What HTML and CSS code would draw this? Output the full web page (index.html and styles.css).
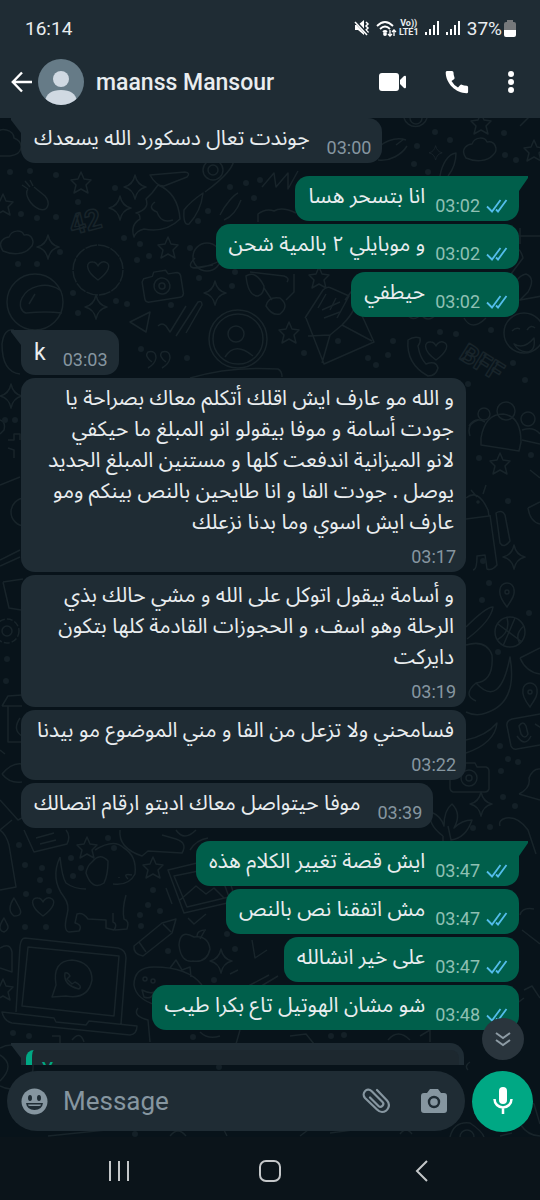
FILE: index.html
```html
<!DOCTYPE html>
<html lang="en">
  <head>
    <meta charset="utf-8" />
    <meta name="viewport" content="width=device-width, initial-scale=1" />
    <title>maanss Mansour</title>
    <link rel="stylesheet" href="styles.css">
  </head>
  <body>
    <!-- shapes used more than once -->
    <svg class="defs" aria-hidden="true">
      <symbol id="ticks" viewBox="0 0 22 15">
        <path d="M1 8.5 6 13.5 14.500 2M10 11.500 12 13.500 20.500 2" fill="none" stroke="#53bdeb" stroke-width="1.800" />
      </symbol>
      <symbol id="signal" viewBox="0 0 15 16">
        <path d="M1 12v3M5 9v6M9 5v10M13 1v14" fill="none" stroke="#fff" stroke-width="2" />
      </symbol>
      <g id="star"><path d="M0-11 3-4 10-3 5 2 7 10 0 6-7 10-5 2-10-3-3-4Z" /></g>
      <g id="sparkle"><path d="M0-12Q2-2 11 0 2 2 0 12-2 2-11 0-2-2 0-12Z" /></g>
      <g id="heart"><path d="M0 10C-14 0-12-9-5-8-2-8 0-4 0-4S2-9 7-8C14-6 11 2 0 10Z" /></g>
      <g id="cloud"><path d="M-15 8C-22-2-12-6-9-6-6-14 4-13 6-8 14-10 18 0 12 5 6 12-6 12-15 8Z" /></g>
      <g id="camera">
        <path d="M-17-10-8-11-6-15 6-15 8-11 17-11Q20-10 20-7V11Q19 14 16 14H-16Q-19 13-19 10V-7Z" />
        <circle r="8" /><circle r="3" />
      </g>
      <g id="pin"><path d="M0 12C-7 3-8-1-7-5A7 7 0 0 1 7-5C8 0 5 4 0 12Z" /><circle cy="-3" r="2" /></g>
      <g id="hand"><path d="M-8-8C-12-3-6 8 3 12 12 15 15 6 9-1L-2-10M-8-8-14-12M-6-10-11-16M-3-11-6-17" /></g>
    </svg>

    <div class="app">
      <header class="header">
        <div class="status">
          <time>16:14</time>
          <div class="status-icons">
            <svg width="16" height="18" viewBox="0 0 16 18" fill="#fff">
              <path d="M1 6h3l6-5v15l-6-5H1z" />
              <path d="M12 3l2 2-2 2 2 2-2 2 2 2-2 2" fill="none" stroke="#fff" stroke-width="1.500" />
              <path d="M1 2l13 14" stroke="#1f2c34" stroke-width="3" />
              <path d="M1 3l12 13" stroke="#fff" stroke-width="1.500" />
            </svg>
            <svg width="21" height="17" viewBox="0 0 21 17" fill="none" stroke="#fff" stroke-width="1.800">
              <path d="M1 6Q9-2 17 6M4 9Q9 4 14 9M7 12Q9 10 11 12" />
              <circle cx="9" cy="14" r="1" fill="#fff" />
              <path d="M14 10v6M12 14l2 2 2-2M18 16v-6M16 12l2-2 2 2" stroke-width="1.300" />
            </svg>
            <span class="volte"><span>Vo))</span><span>LTE1</span></span>
            <svg width="15" height="16"><use href="#signal" /></svg>
            <svg width="15" height="16"><use href="#signal" /></svg>
            <span>37%</span>
            <svg class="battery" width="12" height="17" viewBox="0 0 12 17">
              <path d="M3 0h6v2h1q2 0 2 2v6H0V4q0-2 2-2h1z" fill="#76797b" />
              <path d="M0 10h12v5q0 2-2 2H2q-2 0-2-2z" fill="#fff" />
            </svg>
          </div>
        </div>

        <div class="toolbar">
          <button class="icon-btn back" aria-label="Back">
            <svg width="22" height="22" viewBox="0 0 22 22" fill="none" stroke="#fff" stroke-width="2.400">
              <path d="M21 11H2M11 1.500 1.800 11 11 20.500" />
            </svg>
          </button>
          <svg class="avatar" viewBox="0 0 46 46">
            <defs><clipPath id="round"><circle cx="23" cy="23" r="23" /></clipPath></defs>
            <g clip-path="url(#round)">
              <rect width="46" height="46" fill="#667b87" />
              <circle cx="23" cy="20" r="8" fill="#d0d9e2" />
              <path d="M7 42Q9 31 23 31T39 42L34 46H12Z" fill="#d0d9e2" />
            </g>
          </svg>
          <h1 class="name">maanss Mansour</h1>
          <button class="icon-btn" aria-label="Video call">
            <svg width="28" height="20" viewBox="0 0 28 20" fill="#fff">
              <rect x="0" y="1" width="20" height="18" rx="3" />
              <path d="M21 8l4-4q2-1 2 1v10q0 2-2 1l-4-4z" />
            </svg>
          </button>
          <button class="icon-btn" aria-label="Call">
            <svg width="24" height="24" viewBox="0 0 24 24" fill="#fff">
              <path d="M2 1h5q1.500 0 1.500 1.500 0 3 1 5 .3 1-.5 1.800L6.500 11q2.500 4.500 6.500 6.500l2-2.300q.8-.8 1.800-.5 2 .8 5 1 1.300.1 1.300 1.500v4.500q0 1.500-1.500 1.500C11 23 1 14 .7 2.500.7 1 2 1 2 1z" />
            </svg>
          </button>
          <button class="icon-btn" aria-label="More options">
            <svg width="8" height="24" viewBox="0 0 8 24" fill="#fff">
              <circle cx="4" cy="4" r="3" /><circle cx="4" cy="12" r="3" /><circle cx="4" cy="20" r="3" />
            </svg>
          </button>
        </div>
      </header>

      <main class="room">
        <svg class="wallpaper" viewBox="0 118 540 1019" preserveAspectRatio="xMidYMin slice" aria-hidden="true">
          <!-- top -->
          <path d="M-4 134C0 126 14 130 14 138 24 142 24 154 10 156H-4" />
          <use href="#star" x="481" y="124" /><use href="#star" x="534" y="151" />
          <path d="M404 118A12 12 0 0 0 427 118M410 118a6 6 0 0 0 12 0M520 126l10-10M376 152C380 142 396 136 406 140M378 160C390 162 402 154 407 146M396 145l8-6M440 176c2-12 8-22 16-23 0 10-4 18-8 23" />
          <use href="#cloud" x="481" y="150" /><use href="#sparkle" x="436" y="153" transform="translate(174 61) scale(.6)" />
          <use href="#star" x="81" y="183" /><use href="#star" x="3" y="205" />
          <use href="#sparkle" x="135" y="187" /><use href="#sparkle" x="120" y="208" />
          <use href="#hand" x="36" y="197" />
          <path d="M150 175l35-3q6 1 2 5l-23 9q-8 0-14-11ZM152 193l6-8q20 8 22 34-14 14-36 10-8 2-10 8-4-12 6-18 0-6-4-6 14-4 10-14ZM184 210q6-8 19-17-2 18-14 31-6 2-5-14ZM205 192q30-22 29-34M155 202q-8 6 2 10 4 12 16 8" />
          <circle cx="213" cy="170" r="10" /><circle cx="213" cy="170" r="5" />
          <path d="M220 215c6-12 14-20 18-22M224 220c10-4 14-12 17-20M262 187l12-14 2 14 12-14 0 16 10-18M258 222v-8q8-6 16-3 8-5 22 2" />
          <text x="72" y="235" font-size="28" transform="rotate(-14 72 235)">42</text>
          <use href="#cloud" x="18" y="243" /><use href="#sparkle" x="48" y="247" /><use href="#star" x="168" y="248" />
          <circle cx="98" cy="270" r="25" stroke-dasharray="12 1" /><use href="#heart" x="98" y="270" />
          <use href="#camera" x="162" y="286" transform="rotate(-9 162 286)" />
          <circle cx="207" cy="257" r="14" /><path d="M195 258c-16 16 14 10 26 2M193 268l20-3" />
          <circle cx="35" cy="302" r="28" /><path d="M60 290c-14-9-32-4-38 8-4 8 0 14 4 15q20-2 36 0M29 304l6-10" />
          <use href="#sparkle" x="96" y="307" /><use href="#sparkle" x="215" y="293" /><use href="#star" x="319" y="278" />
          <path d="M246 276q10-6 18 10 0 8-6 10-10 0-12-20ZM266 306q2-10 14-8 10 8 0 16-8 2-14-8ZM264 288l8 12M250 272l34 4q6 2 3 6M286 300l8-8v-18" />
          <path d="M305 318l18-28q4-4 8-2l18 8-12 22M318 308l8-14M330 310l6-12M345 300l12-16" />
          <path d="M505 250q14-8 18 8l-12 16M512 292q4-16 14-18 10 4 2 18l-8 8 22-4M518 236h22M520 228v16" />
          <path d="M130 322l20-10-4 20ZM158 326q4-4 8 0l4 6 16-26M176 336l22-34q4-2 4 3l-16 28" />
          <circle cx="238" cy="339" r="29" /><circle cx="238" cy="339" r="25" /><circle cx="236" cy="334" r="8" />
          <path d="M225 357q10-16 28-1M152 362q-8-6-4-10 8-2 8 6-1 6-8 10M166 362q-8-6-4-10 8-2 8 6-1 6-8 10M190 378q40-12 88-9 4 2 4 8" />
          <use href="#star" x="289" y="333" />
          <path d="M306 318l18 46 50-22-20-44M308 336l22-1 12-10 30 16M330 335l-8 28M322 310l18-8M324 318l16-6M342 325q18-18 12-30" />
          <path d="M408 340q6-4 12-2 1 4-2 8 2 12 8 18 10-4 12 4-2 8-10 8-22-12-20-36Z" />
          <use href="#heart" x="436" y="350" />
          <text x="458" y="358" font-size="26" transform="rotate(32 458 358)">BFF</text>
          <circle cx="524" cy="333" r="20" /><path d="M514 344q10 6 20-6 2 14-8 14-8-1-12-8ZM512 331q4-4 8-2M527 330q4-6 8-2" />
          <path d="M405 312q8 12 16 2 6 10 16 0M464 318q8 14 22 0" />
          <!-- right edge -->
          <path d="M481 438q4-24 22-24 18 2 18 28l-2 9-38-6ZM470 436q-4-12 8-16M522 440l18 4M469 426q6-10 16-4M522 430q12-4 18 4" />
          <circle cx="506" cy="411" r="9" /><circle cx="484" cy="414" r="6" /><circle cx="528" cy="419" r="7" />
          <use href="#star" x="500" y="464" />
          <path d="M466 498q12-10 22 12l1 6-23 3M471 490l6 7M486 485l-3 9M490 515l7 50q-5 6-10 4l-2-14-8 1q0 14-4 14M496 513q6-4 9 2l5 26q-6 8-10 2ZM528 508l12-6M528 508q2 14 12 16M530 470l10 8" />
          <circle cx="478" cy="502" r="1" /><use href="#sparkle" x="514" y="557" />
          <use href="#pin" x="507" y="595" /><use href="#pin" x="530" y="695" />
          <circle cx="510" cy="632" r="15" /><path d="M498 624l24 18M503 646l12-28M497 640q14-8 10-22M520 644q-6-10 4-18" />
          <path d="M466 627q20-20 27-20-2 14-26 32M466 645q20-6 26 10 2 26-16 28-14 12 0 18M476 683q24 26 34-26 8 46-24 56-10 4-20-1M520 658l20-10M520 658q6 14 20 16M466 740q20-4 31-17-2 20-31 30" />
          <path d="M540 714l-28 5q-6 2-5 7l4 20q2 4 6 3l23-4M519 726q4-6 7 0l2 8q-3 6-7 0ZM517 736q8 12 14 0M535 724l8 5" />
          <use href="#camera" x="469" y="778" /><use href="#sparkle" x="481" y="804" />
          <path d="M519 794q12-6 10-16 4-10 11-9M519 794l21 6M500 826q-2-6 6-8 12-2 22 12l8 24" />
          <path d="M443 836q-16-12-12-24 10 4 13 14 0-16 8-22 10 10 2 24 8-8 18-8-6 18-21 20l-3-14M443 836v10" />
          <!-- left edge -->
          <use href="#sparkle" x="11" y="396" />
          <path d="M0 420q6 2 4 10l-4 4M8 440h6v-6h6v6M8 448l6 2v8M0 485l20-8M0 560l20-10M0 566l20-9M14 330q-10-2-12 14 0 28 18 30" />
          <circle cx="25" cy="512" r="14" /><path d="M3 582l20-3M3 582l6 26 12 2" />
          <circle cx="7" cy="631" r="12" stroke-dasharray="6 2" /><circle cx="7" cy="631" r="5" />
          <path d="M2 706l6-10 14-1M2 706h20M8 706v36h14M20 718q-8 12 2 18M0 750l5 4M2 774q10-12 20-10M2 774q8 10 20 8M0 800l18 20 10-5M0 830l12-10" />
          <!-- bottom -->
          <path d="M0 830q6 4 9 15l7 42-16 3M24 830l10 22 33-8q4-8-1-14M36 838l18-5M40 844l16-4" />
          <use href="#star" x="87" y="848" /><use href="#star" x="153" y="868" />
          <path d="M120 830q-2 18 22 26l6-5 34 2q6-10-6-14l-14-4M190 850q6-10 18-12M176 830q8 12 20 0" />
          <path d="M60 857q-10 22 4 40 6 8 3 18-4 16 2 17l10-1q4-6-4-8l2-9q6-2 11 5l18 1 0 8 8 2q4-6-1-8v-9M60 857q2 20 6 26 8 6 20 6M113 884q16 2 22-10 2-18-11-26-10-10-29 2M92 862q8-10 16-1 0 14-4 22-12 8-18-10 1-7 6-11M126 895q-4 14-2 24 6 2 3 10l-12 1" />
          <path d="M128 879q-6-6 4-4M119 877v1M14 898q-8 12 0 18 10 0 5-9ZM4 918q-8 12 0 14 6-3 3-8Z" />
          <use href="#heart" x="43" y="906" />
          <path d="M168 870l54-13 14 44-52 12ZM174 876l44-9 11 30-42 10ZM180 900l16-14 10 8 8-6 10 10M166 888l6 16M188 918l6 6 12-10" />
          <path d="M134 946l28-23 14-4-4 14-29 23q-10-2-9-10ZM139 942l7 10M163 924l8 8" />
          <path d="M194 937q-14-8-15 8 2 18 14 16 14 2 17-12-2-14-16-12ZM197 936q0-6 9-6M200 939l5-9" />
          <path d="M25 938l93 10q8 2 8 10l-5 66M25 938q-4 0-5 8l-4 66M28 947l91 9-5 60-92-10ZM2 1012l52 6 2 4 30 3 3-4 48 5q0 8-7 9l-118-12q-8-2-10-11Z" />
          <path d="M52 997l4-12q-4-24 16-25 20 2 20 20-4 20-26 16l-14 1ZM65 973q-2 12 14 16 4-3-4-7l-3 2-5-5 3-3q-2-4-5-3Z" />
          <circle cx="145" cy="979" r="2" /><circle cx="153" cy="981" r="2" />
          <path d="M134 985q0-18 20-18 34 0 48 18M134 985q2 14 22 20M142 990q8 4 12 2-2 8-10 5ZM170 968l6-8 6 10 8-3 1 10M0 948q10-6 12 4v20l-12-4" />
          <use href="#star" x="3" y="990" /><use href="#sparkle" x="221" y="961" />
          <path d="M230 974l8-4M229 990l10 1 30-16M252 940l3 18 12-8M258 988l20-12" />
          <path d="M520 915q2-8 14-6M522 930l18 14M524 990l8-4 8 12M516 1004l8-6" />
          <path d="M138 1008q-6 8 10 12l2 22M0 1048a22 22 0 1 1 0 38M0 1055q16 10 0 26M52 1036h8v8h-8M72 1040q8-10 12 2M200 1032q8 8 20 4M240 1030l-4 14M290 1036l16-2 8 10M388 1040q10-12 22 0M420 1036l10-6v12" />
          <path d="M470 1062q-6 4-2 8M48 1136l58-6M170 1136q8-10 16 0M224 1130l3 6M300 1136l8-6M330 1133l30-4M400 1134q6-8 12 0M450 1137q4-16 20-14 12 8 14 14M460 1137a7 7 0 0 1 14 0M500 1136l12-3M524 1100l10 4 6 20M520 1124q8 12 20 12" />
          <!-- confetti -->
          <path class="dots" d="M10 172h0M30 171h0M56 175h0M21 214h0M37 218h0M78 202h0M115 188h0M56 217h0M124 238h0M140 244h0M137 260h0M60 252h0M37 264h0M18 264h0M73 293h0M127 304h0M116 301h0M78 313h0M171 305h0M199 278h0M232 286h0M208 211h0M198 221h0M230 187h0M246 183h0M260 180h0M254 198h0M190 248h0M149 256h0M235 272h0M141 349h0M187 358h0M304 353h0M338 341h0M393 341h0M368 358h0M376 365h0M388 355h0M440 332h0M456 334h0M491 330h0M513 363h0M525 380h0M468 384h0M479 458h0M508 501h0M531 455h0M483 561h0M489 583h0M529 613h0M498 652h0M482 600h0M500 746h0M508 759h0M518 762h0M501 771h0M503 797h0M473 828h0M490 827h0M515 806h0M417 146h0M435 132h0M450 140h0M504 133h0M505 155h0M516 160h0M414 164h0M428 172h0M19 845h0M25 865h0M42 868h0M40 880h0M49 891h0M26 894h0M46 927h0M25 927h0M71 858h0M81 868h0M73 876h0M108 838h0M114 848h0M153 890h0M148 905h0M140 915h0M160 911h0M141 926h0M168 951h0M227 934h0M235 949h0M214 980h0M13 1033h0M29 1036h0M331 1036h0M344 1035h0M193 1037h0M219 1067h0M135 1134h0M5 420h0M15 420h0M7 659h0M6 681h0" />
        </svg>

        <ol class="messages">
          <li class="msg in tail"><p dir="rtl">جوندت تعال دسكورد الله يسعدك</p><time>03:00</time></li>

          <li class="msg out tail first"><p dir="rtl">انا بتسحر هسا</p><time>03:02</time><svg class="ticks"><use href="#ticks" /></svg></li>
          <li class="msg out"><p dir="rtl">و موبايلي ٢ بالمية شحن</p><time>03:02</time><svg class="ticks"><use href="#ticks" /></svg></li>
          <li class="msg out"><p dir="rtl">حيطفي</p><time>03:02</time><svg class="ticks"><use href="#ticks" /></svg></li>

          <li class="msg in tail first"><p>k</p><time>03:03</time></li>
          <li class="msg in long">
            <p dir="rtl">و الله مو عارف ايش اقلك أتكلم معاك بصراحة يا<br>جودت أسامة و موفا بيقولو انو المبلغ ما حيكفي<br>لانو الميزانية اندفعت كلها و مستنين المبلغ الجديد<br>يوصل . جودت الفا و انا طايحين بالنص بينكم ومو<br>عارف ايش اسوي وما بدنا نزعلك</p>
            <time>03:17</time>
          </li>
          <li class="msg in long">
            <p dir="rtl">و أسامة بيقول اتوكل على الله و مشي حالك بذي<br>الرحلة وهو اسف، و الحجوزات القادمة كلها بتكون<br>دايركت</p>
            <time>03:19</time>
          </li>
          <li class="msg in long"><p dir="rtl">فسامحني ولا تزعل من الفا و مني الموضوع مو بيدنا</p><time>03:22</time></li>
          <li class="msg in"><p dir="rtl">موفا حيتواصل معاك اديتو ارقام اتصالك</p><time>03:39</time></li>

          <li class="msg out tail first"><p dir="rtl">ايش قصة تغيير الكلام هذه</p><time>03:47</time><svg class="ticks"><use href="#ticks" /></svg></li>
          <li class="msg out"><p dir="rtl">مش اتفقنا نص بالنص</p><time>03:47</time><svg class="ticks"><use href="#ticks" /></svg></li>
          <li class="msg out"><p dir="rtl">على خير انشالله</p><time>03:47</time><svg class="ticks"><use href="#ticks" /></svg></li>
          <li class="msg out"><p dir="rtl">شو مشان الهوتيل تاع بكرا طيب</p><time>03:48</time><svg class="ticks"><use href="#ticks" /></svg></li>

          <li class="msg in tail first reply"><blockquote class="quote">You</blockquote></li>
        </ol>

        <form class="composer">
          <button type="button" class="scroll-down" aria-label="Scroll to bottom">
            <svg width="18" height="16" viewBox="0 0 18 16" fill="none" stroke="#8d9ba4" stroke-width="2">
              <path d="M2 2l7 5 7-5M2 9l7 5 7-5" />
            </svg>
          </button>
          <div class="field">
            <button type="button" class="icon-btn" aria-label="Emoji">
              <svg width="27" height="27" viewBox="0 0 27 27">
                <circle cx="13.500" cy="13.500" r="13" fill="#8696a0" />
                <ellipse cx="9" cy="10" rx="2" ry="3" fill="#1f2c34" /><ellipse cx="18" cy="10" rx="2" ry="3" fill="#1f2c34" />
                <path d="M5 15h17q-1 7-8.500 7T5 15z" fill="#1f2c34" /><path d="M7 16.500h13q0 1.500-2 1.500H9q-2 0-2-1.500z" fill="#8696a0" />
              </svg>
            </button>
            <input type="text" placeholder="Message" aria-label="Message">
            <button type="button" class="icon-btn" aria-label="Attach">
              <svg width="28" height="26" viewBox="0 0 28 26" fill="none" stroke="#8696a0" stroke-width="2.200" stroke-linecap="round">
                <path d="M15 2 25 12.500C29 17 26 24 20 24 18 24 16.500 23 15 21.500L3 10C-1 5.500 5-1.500 9.500 3L20.500 14C23 16.500 19 20.500 16.500 18L8 9.500" />
              </svg>
            </button>
            <button type="button" class="icon-btn" aria-label="Camera">
              <svg width="26" height="26" viewBox="0 0 26 26">
                <path d="M9 1h8l3 4h3q3 0 3 3v14q0 3-3 3H3q-3 0-3-3V8q0-3 3-3h3z" fill="#8696a0" />
                <circle cx="13" cy="14" r="5" fill="none" stroke="#1f2c34" stroke-width="2.400" />
              </svg>
            </button>
          </div>
          <button type="button" class="mic" aria-label="Voice message">
            <svg width="20" height="28" viewBox="0 0 20 28">
              <rect x="6" y="0" width="8" height="17" rx="4" fill="#fff" />
              <path d="M1.500 12a8.500 8.500 0 0 0 17 0M10 20v7" fill="none" stroke="#fff" stroke-width="2.500" />
            </svg>
          </button>
        </form>
      </main>

      <nav class="navbar">
        <button aria-label="Recent apps">
          <svg width="20" height="22" viewBox="0 0 20 22" stroke="#c4c7c9" stroke-width="2"><path d="M1 1v20M10 1v20M19 1v20" /></svg>
        </button>
        <button aria-label="Home">
          <svg width="22" height="22" viewBox="0 0 22 22" fill="none" stroke="#c4c7c9" stroke-width="2"><rect x="1" y="1" width="20" height="20" rx="6" /></svg>
        </button>
        <button aria-label="Back">
          <svg width="22" height="22" viewBox="0 0 22 22" fill="none" stroke="#c4c7c9" stroke-width="2"><path d="M16 1 6 11l10 10" /></svg>
        </button>
      </nav>
    </div>
  </body>
</html>
```
FILE: styles.css
```css
* {
  box-sizing: border-box;
}

body {
  margin: 0;
  background: #0b141a;
  color: #e9edef;
  font-family: Roboto, sans-serif;
}

button {
  padding: 0;
  border: 0;
  background: none;
  cursor: pointer;
}

svg {
  display: block;
  flex: none;
}

.defs {
  position: absolute;
  width: 0;
  height: 0;
}

.app {
  display: flex;
  flex-direction: column;
  height: 100vh;
}

/* header */
.header {
  background: #1f2c34;
}

.status {
  display: flex;
  justify-content: space-between;
  align-items: center;
  height: 46px;
  padding: 10px 24px 0 25px;
  font-size: 19px;
}

.status-icons {
  display: flex;
  align-items: center;
  gap: 6px;
}

.volte {
  display: flex;
  flex-direction: column;
  width: 20px;
  margin-left: -4px;
  font-size: 9px;
  font-weight: 700;
  line-height: 9px;
  text-align: center;
}

.battery {
  margin-left: -4px;
}

.toolbar {
  display: flex;
  align-items: center;
  height: 72px;
  padding: 0 25px 0 11px;
}

.icon-btn {
  flex: none;
}

.toolbar .icon-btn + .icon-btn {
  margin-left: 38px;
}

.avatar {
  width: 46px;
  height: 46px;
  margin-left: 5px;
}

.name {
  flex: 1;
  margin: 0 0 0 12px;
  font-size: 23px;
  font-weight: 500;
}

/* chat area */
.room {
  position: relative;
  display: flex;
  flex: 1;
  flex-direction: column;
  min-height: 0;
  background: #08131a;
}

.wallpaper {
  position: absolute;
  inset: 0;
  width: 100%;
  height: 100%;
  fill: none;
  stroke: #18242a;
  stroke-width: 1.5;
  stroke-linejoin: round;
}

.wallpaper text {
  font-family: Roboto, sans-serif;
  font-weight: 700;
}

.dots {
  stroke-width: 6;
  stroke-linecap: round;
  stroke: #142027;
}

.messages {
  position: relative;
  display: flex;
  flex: 1;
  flex-direction: column;
  align-items: flex-start;
  gap: 3px;
  min-height: 0;
  margin: 0;
  padding: 0 21px;
  overflow: hidden;
  list-style: none;
}

.msg {
  position: relative;
  display: flex;
  flex: none;
  padding: 5px 11px 0 13px;
  min-height: 45px;
  border-radius: 14px;
  background: #1f2c34;
}

.msg p {
  margin: 0;
  padding-top: 2px;
  font-size: 23px;
  line-height: 31px;
  white-space: nowrap;
}

.msg p[dir="rtl"] {
  padding-top: 0;
  font-family: "Noto Sans Arabic", "DejaVu Sans", sans-serif;
  font-size: 21px;
}

.msg time {
  align-self: flex-end;
  margin-left: 17px;
  padding-bottom: 4px;
  color: #8696a0;
  font-size: 18px;
  line-height: 22px;
}

.msg.first {
  margin-top: 10px;
}

.out {
  align-self: flex-end;
  background: #005f4b;
}

.msg.out time {
  margin-left: 10px;
  color: #8fc0b3;
}

.ticks {
  align-self: flex-end;
  width: 22px;
  height: 15px;
  margin: 0 0 8px 6px;
}

.long {
  flex-direction: column;
  width: 445px;
  max-width: 100%;
  padding-right: 12px;
}

.msg.long time {
  margin-top: 8px;
  margin-right: -2px;
}

/* little corner that sticks out of the first bubble of a group */
.tail::before {
  content: "";
  position: absolute;
  top: 0;
  width: 24px;
  height: 15px;
  background: inherit;
}

.in.tail {
  border-top-left-radius: 0;
}

.in.tail::before {
  left: -10px;
  clip-path: polygon(0 0, 100% 0, 100% 100%, 10px 100%, 0 2px);
}

.out.tail {
  border-top-right-radius: 0;
}

.out.tail::before {
  right: -9px;
  clip-path: polygon(0 0, 100% 0, 100% 2px, 15px 100%, 0 100%);
}

.reply {
  width: 443px;
  max-width: 100%;
  height: 100px;
  padding: 7px 5px;
}

.quote {
  position: relative;
  flex: 1;
  margin: 0;
  padding: 8px 10px;
  border-left: 6px solid #00a884;
  border-radius: 8px;
  background: #1d282f;
  color: #00a884;
  font-size: 18px;
  font-weight: 500;
}

/* composer */
.composer {
  position: relative;
  display: flex;
  align-items: center;
  gap: 7px;
  height: 72px;
  padding: 0 7px;
}

.field {
  display: flex;
  flex: 1;
  align-items: center;
  height: 60px;
  min-width: 0;
  padding: 0 18px 0 14px;
  border-radius: 30px;
  background: #1f2c34;
}

.field input {
  flex: 1;
  min-width: 0;
  padding: 0 15px;
  border: 0;
  outline: 0;
  background: none;
  color: #e9edef;
  font-family: inherit;
  font-size: 26px;
}

.field input::placeholder {
  color: #8696a0;
}

.field .icon-btn + .icon-btn {
  margin-left: 31px;
}

.mic,
.scroll-down {
  display: grid;
  flex: none;
  place-items: center;
  border-radius: 50%;
}

.mic {
  width: 61px;
  height: 61px;
  background: #00a884;
}

.scroll-down {
  position: absolute;
  right: 16px;
  bottom: 77px;
  width: 42px;
  height: 42px;
  background: #2a353d;
}

/* system navigation */
.navbar {
  display: flex;
  justify-content: space-around;
  align-items: center;
  height: 63px;
  padding: 4px 42px 0 44px;
}
```
